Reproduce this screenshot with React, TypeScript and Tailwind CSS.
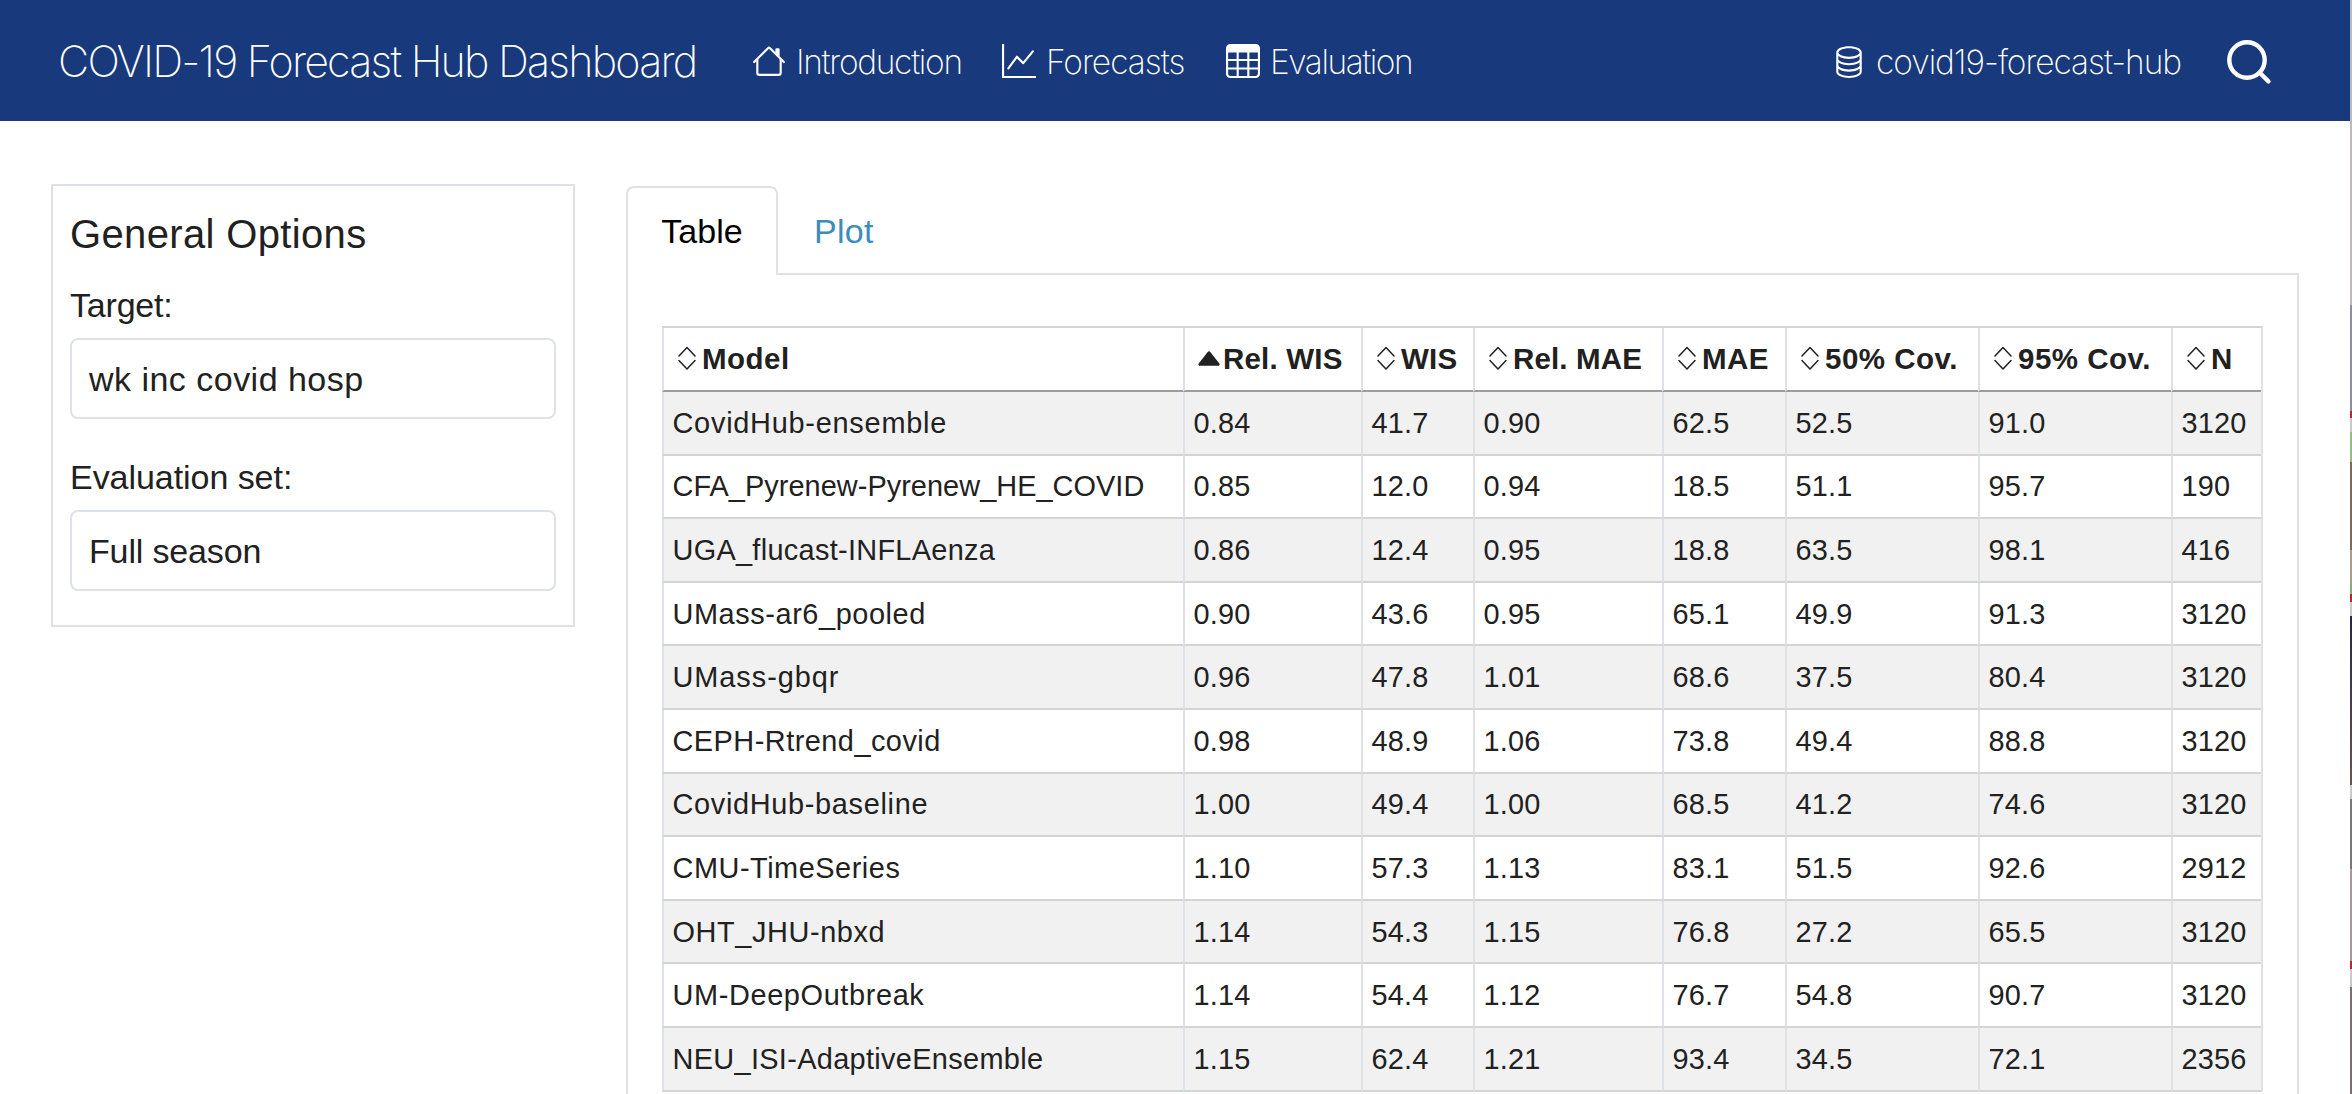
import type { ReactNode } from "react";
import { BsDatabase, BsGraphUp, BsTable } from "react-icons/bs";

const columns = [
  { label: "Model", width: "w-[521px]", tracking: "tracking-[0.5px]" },
  { label: "Rel. WIS", width: "w-[178px]", tracking: "tracking-[0.2px]" },
  { label: "WIS", width: "w-[112px]", tracking: "tracking-[0.2px]" },
  { label: "Rel. MAE", width: "w-[189px]", tracking: "tracking-[0.15px]" },
  { label: "MAE", width: "w-[123px]", tracking: "tracking-[0.4px]" },
  { label: "50% Cov.", width: "w-[193px]", tracking: "tracking-[0.5px]" },
  { label: "95% Cov.", width: "w-[193px]", tracking: "tracking-[0.5px]" },
  { label: "N", width: "w-[90px]", tracking: "" },
];

const rows = [
  { model: "CovidHub-ensemble", tracking: "tracking-[0.75px]", values: ["0.84", "41.7", "0.90", "62.5", "52.5", "91.0", "3120"] },
  { model: "CFA_Pyrenew-Pyrenew_HE_COVID", tracking: "tracking-[0.05px]", values: ["0.85", "12.0", "0.94", "18.5", "51.1", "95.7", "190"] },
  { model: "UGA_flucast-INFLAenza", tracking: "tracking-[0.3px]", values: ["0.86", "12.4", "0.95", "18.8", "63.5", "98.1", "416"] },
  { model: "UMass-ar6_pooled", tracking: "tracking-[0.58px]", values: ["0.90", "43.6", "0.95", "65.1", "49.9", "91.3", "3120"] },
  { model: "UMass-gbqr", tracking: "tracking-[0.95px]", values: ["0.96", "47.8", "1.01", "68.6", "37.5", "80.4", "3120"] },
  { model: "CEPH-Rtrend_covid", tracking: "tracking-[0.48px]", values: ["0.98", "48.9", "1.06", "73.8", "49.4", "88.8", "3120"] },
  { model: "CovidHub-baseline", tracking: "tracking-[0.68px]", values: ["1.00", "49.4", "1.00", "68.5", "41.2", "74.6", "3120"] },
  { model: "CMU-TimeSeries", tracking: "tracking-[0.53px]", values: ["1.10", "57.3", "1.13", "83.1", "51.5", "92.6", "2912"] },
  { model: "OHT_JHU-nbxd", tracking: "tracking-[0.6px]", values: ["1.14", "54.3", "1.15", "76.8", "27.2", "65.5", "3120"] },
  { model: "UM-DeepOutbreak", tracking: "tracking-[0.63px]", values: ["1.14", "54.4", "1.12", "76.7", "54.8", "90.7", "3120"] },
  { model: "NEU_ISI-AdaptiveEnsemble", tracking: "tracking-[0.33px]", values: ["1.15", "62.4", "1.21", "93.4", "34.5", "72.1", "2356"] },
];

function HouseIcon() {
  return (
    <svg viewBox="0 0 16 16" className="size-[34px]" fill="currentColor" fillRule="evenodd">
      <path d="M2 13.5V7h1v6.5a.5.5 0 0 0 .5.5h9a.5.5 0 0 0 .5-.5V7h1v6.5a1.5 1.5 0 0 1-1.5 1.5h-9A1.5 1.5 0 0 1 2 13.5zm11-11V6l-2-2V2.5a.5.5 0 0 1 .5-.5h1a.5.5 0 0 1 .5.5z" />
      <path d="M7.293 1.5a1 1 0 0 1 1.414 0l6.647 6.646a.5.5 0 0 1-.708.708L8 2.207 1.354 8.854a.5.5 0 1 1-.708-.708L7.293 1.5z" />
    </svg>
  );
}

function SortIcon({ active }: { active: boolean }) {
  if (active) {
    return (
      <svg viewBox="0 0 22 15" className="mr-[3px] h-[15px] w-[22px] shrink-0" fill="currentColor">
        <path d="M9.7 1.1a1.7 1.7 0 0 1 2.6 0l9 11.4c.8 1 .2 2.2-1 2.2H1.7c-1.2 0-1.8-1.2-1-2.2z" />
      </svg>
    );
  }
  return (
    <svg
      viewBox="0 0 18 24"
      className="mr-1.5 mb-px ml-px h-6 w-[18px] shrink-0"
      fill="none"
      stroke="currentColor"
      strokeWidth="1.5"
      strokeLinecap="round"
      strokeLinejoin="round"
    >
      <path d="M1 10l8-8.5 8 8.5M1 14.5l8 8.5 8-8.5" />
    </svg>
  );
}

function NavLink({ icon, tracking, children }: { icon: ReactNode; tracking: string; children: ReactNode }) {
  return (
    <a href="#" className="flex items-center gap-2.5 text-[33.5px] leading-none">
      {icon}
      <span className={`pt-1 ${tracking}`}>{children}</span>
    </a>
  );
}

function Navbar() {
  return (
    <header className="flex h-[121px] items-center bg-[#18397b] pl-[58px] font-['Inter',sans-serif] font-[250] text-white">
      <a href="#" className="w-[694px] pt-0.5 text-[43px] leading-none tracking-[-1.78px] whitespace-nowrap">
        COVID-19 Forecast Hub Dashboard
      </a>
      <nav className="flex">
        <div className="w-[250px]">
          <NavLink icon={<HouseIcon />} tracking="tracking-[-1.3px]">Introduction</NavLink>
        </div>
        <div className="w-[224px]">
          <NavLink icon={<BsGraphUp className="size-[34px]" />} tracking="tracking-[-1px]">Forecasts</NavLink>
        </div>
        <NavLink icon={<BsTable className="size-[34px]" />} tracking="tracking-[-1.45px]">Evaluation</NavLink>
      </nav>
      <div className="ml-auto flex items-center gap-[45px] pr-[78px]">
        <NavLink icon={<BsDatabase className="size-[34px]" />} tracking="tracking-[-1.06px]">covid19-forecast-hub</NavLink>
        <svg
          viewBox="0 0 46 46"
          className="mt-0.5 size-[46px]"
          fill="none"
          stroke="currentColor"
          strokeWidth="4.4"
          strokeLinecap="round"
        >
          <circle cx="21" cy="21" r="17.7" />
          <path d="M34 34l8.5 8.5" />
        </svg>
      </div>
    </header>
  );
}

function Field({ label, labelTracking, value, valueTracking }: {
  label: string;
  labelTracking: string;
  value: string;
  valueTracking: string;
}) {
  return (
    <div>
      <label className={`block h-[55px] leading-[44px] ${labelTracking}`}>{label}</label>
      <div
        className={`flex h-[81px] items-center rounded-lg border-2 border-[#dee2e6] px-[17px] pt-0.5 ${valueTracking}`}
      >
        {value}
      </div>
    </div>
  );
}

function Sidebar() {
  return (
    <aside className="h-[443px] w-[524px] shrink-0 border-2 border-[#dee2e6] px-[17px] pt-6">
      <h2 className="mb-[25px] text-[40px] leading-[48px] tracking-[0.35px]">General Options</h2>
      <div className="flex flex-col gap-9">
        <Field
          label="Target:"
          labelTracking="tracking-[-0.2px]"
          value="wk inc covid hosp"
          valueTracking="tracking-[0.48px]"
        />
        <Field
          label="Evaluation set:"
          labelTracking="tracking-[-0.05px]"
          value="Full season"
          valueTracking="tracking-[-0.15px]"
        />
      </div>
    </aside>
  );
}

function EvaluationTable() {
  return (
    <table className="w-[1601px] table-fixed border-separate border-spacing-0 border-t-2 border-r-2 border-t-[#d3d4d5] border-r-[#dee2e6] text-left text-[28.9px] leading-[43px]">
      <thead>
        <tr className="text-[29.5px]">
          {columns.map((c) => (
            <th
              key={c.label}
              scope="col"
              className={`${c.width} h-[64px] border-b-2 border-l-2 border-b-[#9d9d9e] border-l-[#dee2e6] p-0 pb-px font-bold`}
            >
              <div className="flex items-center pl-[13px] whitespace-nowrap">
                <SortIcon active={c.label === "Rel. WIS"} />
                <span className={c.tracking}>{c.label}</span>
              </div>
            </th>
          ))}
        </tr>
      </thead>
      <tbody>
        {rows.map((row) => (
          <tr key={row.model} className="odd:bg-[#f1f1f1]">
            <td className="h-[63.6px] border-b-2 border-l-2 border-b-[#d3d4d5] border-l-[#dee2e6] pt-px pr-0 pb-0 pl-[8.5px]">
              <span className={row.tracking}>{row.model}</span>
            </td>
            {row.values.map((value, i) => (
              <td
                key={columns[i + 1].label}
                className="border-b-2 border-l-2 border-b-[#d3d4d5] border-l-[#dee2e6] pt-px pr-0 pb-0 pl-[8.5px] tracking-[0.2px]"
              >
                {value}
              </td>
            ))}
          </tr>
        ))}
      </tbody>
    </table>
  );
}

// Sliver of the desktop that shows past the window's right edge
function DesktopEdge() {
  return (
    <div className="flex w-0.5 shrink-0 flex-col">
      <div className="h-[305px] bg-[#bdb9bc]" />
      <div className="h-[106px] bg-[#8f8e98]" />
      <div className="h-[7px] bg-[#b52a31]" />
      <div className="h-[14px] bg-[#c9c9c9]" />
      <div className="h-[30px] bg-[#98ba83]" />
      <div className="h-[88px] bg-[#7c6a5c]" />
      <div className="h-[33px] bg-[#ab9b8c]" />
      <div className="h-[11px] bg-[#86ac7d]" />
      <div className="h-2 bg-[#b52a31]" />
      <div className="h-[14px] bg-[#c9c9c9]" />
      <div className="h-[169px] bg-linear-to-b from-[#26283d] to-[#665650]" />
      <div className="h-[14px] bg-[#c9c9c9]" />
      <div className="h-[70px] bg-[#77787a]" />
      <div className="h-[92px] bg-[#a8979d]" />
      <div className="h-2 bg-[#b52a31]" />
      <div className="h-[18px] bg-[#c9c9c9]" />
      <div className="flex-1 bg-[#7b6e72]" />
    </div>
  );
}

export default function App() {
  return (
    <div className="flex h-[1094px] w-[2352px] overflow-hidden bg-white font-['Liberation_Sans',sans-serif] text-[34px] text-[#212121]">
      <div className="w-[2350px]">
        <Navbar />
        <main className="flex items-start gap-[51px] pt-[63px] pl-[51px]">
          <Sidebar />
          <section className="w-[1673px] pt-0.5">
            <div className="flex h-[89px]">
              <button className="w-[152px] rounded-t-lg border-2 border-b-0 border-[#dee2e6] text-black">Table</button>
              <div className="flex flex-1 items-center border-b-2 border-[#dee2e6] pt-1 pl-9">
                <button className="tracking-[0.3px] text-[#3c8dbc]">Plot</button>
              </div>
            </div>
            <div className="h-[900px] border-x-2 border-[#dee2e6] pt-[51px] pl-[34px]">
              <EvaluationTable />
            </div>
          </section>
        </main>
      </div>
      <DesktopEdge />
    </div>
  );
}
